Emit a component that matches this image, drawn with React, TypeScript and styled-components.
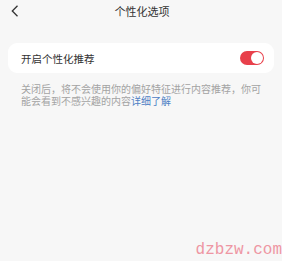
import React from "react";
import styled, { createGlobalStyle } from "styled-components";

const Global = createGlobalStyle`
  html, body { margin: 0; padding: 0; background: #f7f7f7; }
  body { font-family: "Noto Sans CJK SC", "Noto Sans", sans-serif; }
  * { box-sizing: border-box; }
`;

const Page = styled.div`
  width: 282px;
  height: 261px;
  background: #f7f7f7;
  display: flex;
  flex-direction: column;
  position: relative;
  overflow: hidden;
`;

const NavBar = styled.div`
  height: 22px;
  display: grid;
  grid-template-columns: 40px 1fr 40px;
  align-items: center;
`;

const BackButton = styled.div`
  display: flex;
  align-items: center;
  padding-left: 11px;
  height: 22px;
`;

const Title = styled.div`
  text-align: center;
  font-size: 11px;
  color: #333;
  line-height: 22px;
  margin-left: 2px;
`;

const Card = styled.div`
  margin: 21px 8px 0 8px;
  height: 30px;
  background: #fff;
  border-radius: 9px;
  display: flex;
  align-items: center;
  justify-content: space-between;
  padding: 0 10px 0 13px;
`;

const Label = styled.span`
  font-size: 10.5px;
  color: #333;
`;

const Toggle = styled.div<{ on: boolean }>`
  width: 24px;
  height: 14px;
  border-radius: 7px;
  background: ${(p) => (p.on ? "#e8404b" : "#ccc")};
  display: flex;
  align-items: center;
  justify-content: ${(p) => (p.on ? "flex-end" : "flex-start")};
  padding: 1px;
`;

const Knob = styled.div`
  width: 12px;
  height: 12px;
  border-radius: 50%;
  background: #fff;
`;

const Description = styled.p`
  margin: 10px 19px 0 21px;
  font-size: 10px;
  line-height: 12px;
  color: #a3a3a3;
`;

const Link = styled.span`
  color: #4d80c4;
`;

const Watermark = styled.div`
  position: absolute;
  right: 0px;
  bottom: 2px;
  font-family: "Liberation Mono", monospace;
  font-size: 16px;
  color: #ee96a3;
`;

export default function App() {
  return (
    <>
      <Global />
      <Page>
        <NavBar>
          <BackButton>
            <svg width="8" height="12" viewBox="0 0 8 12">
              <path d="M6.5 0.8 L1.3 6 L6.5 11.2" fill="none" stroke="#333" strokeWidth="1.3" />
            </svg>
          </BackButton>
          <Title>个性化选项</Title>
          <div />
        </NavBar>
        <Card>
          <Label>开启个性化推荐</Label>
          <Toggle on={true}>
            <Knob />
          </Toggle>
        </Card>
        <Description>
          关闭后，将不会使用你的偏好特征进行内容推荐，你可能会看到不感兴趣的内容<Link>详细了解</Link>
        </Description>
        <Watermark>dzbzw.com</Watermark>
      </Page>
    </>
  );
}
